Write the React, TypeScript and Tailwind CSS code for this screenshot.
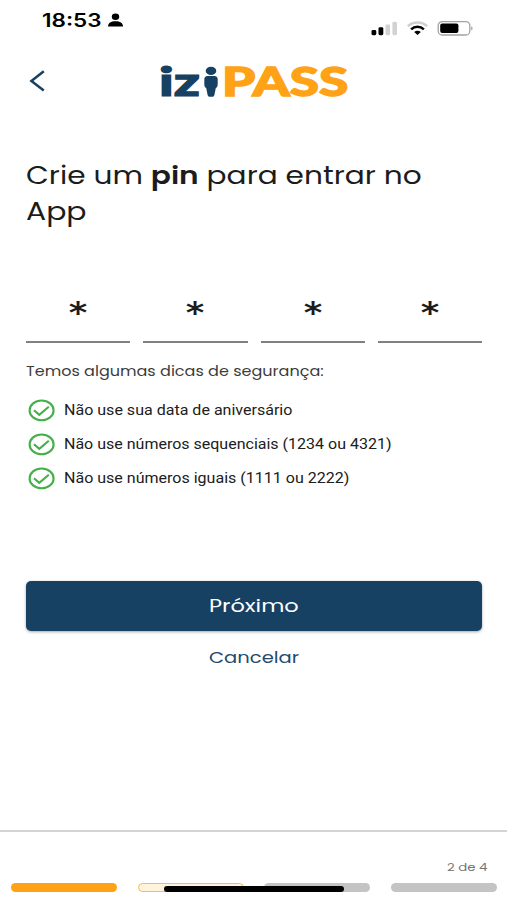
import { useLayoutEffect, useRef, useState } from "react";
import type { ReactNode } from "react";

const poppins = "font-['Poppins','Inter',sans-serif] [font-feature-settings:'cv11']";

// Stretches a single line of text horizontally so that it spans `width` pixels.
function FitText({ width, className, children }: { width: number; className: string; children: ReactNode }) {
  const ref = useRef<HTMLSpanElement>(null);
  const [scale, setScale] = useState(1);
  useLayoutEffect(() => {
    if (ref.current) setScale(width / ref.current.offsetWidth);
  }, [width]);
  return (
    <div className={className} style={{ width }}>
      <span ref={ref} className="inline-block origin-left whitespace-nowrap align-top" style={{ transform: `scaleX(${scale})` }}>
        {children}
      </span>
    </div>
  );
}

function StatusBar() {
  return (
    <div className="flex h-[45px] items-start justify-between pl-[42px] pr-[34px]">
      <div className="flex items-start">
        <FitText width={60} className="pt-[11px] font-['Inter',sans-serif] text-[18px] leading-5 font-semibold text-black">
          18:53
        </FitText>
        <svg className="mt-[13px] ml-[6px]" width="15" height="14" viewBox="0 0 15 14">
          <ellipse cx="7.5" cy="3.7" rx="3.7" ry="3.3" />
          <path d="M0 13.5C0 10 3 8.2 7.5 8.2S15 10 15 13.5Z" />
        </svg>
      </div>
      <div className="flex items-start pt-[20px]">
        <svg width="27" height="16" viewBox="0 0 27 16">
          <rect x="0.5" y="10" width="4.8" height="5.2" rx="1.4" />
          <rect x="7.5" y="7.2" width="4.8" height="8" rx="1.4" />
          <rect x="14.5" y="4.5" width="4.6" height="10.7" rx="1.4" fill="#d2d2d2" />
          <rect x="21.4" y="1.8" width="4.6" height="13.4" rx="1.4" fill="#d2d2d2" />
        </svg>
        <svg className="ml-[9px]" width="21" height="16" viewBox="0 0 21 16" fill="none">
          <path d="M.8 6.2C6 1.2 15 1.2 20.2 6.2" stroke="#cfcfcf" strokeWidth="2.5" />
          <path d="M4.1 9.3C7.8 5.8 13.2 5.8 16.9 9.3" stroke="#000" strokeWidth="2.5" />
          <path d="M7.2 12.1C9.2 10.3 11.8 10.3 13.8 12.1L10.5 15Z" fill="#000" />
        </svg>
        <svg className="ml-[9px]" width="36" height="16" viewBox="0 0 36 16">
          <rect x="1.2" y="1.6" width="31.6" height="13.4" rx="4" fill="#fff" stroke="#a3a3a3" strokeWidth="1.3" />
          <rect x="3.2" y="3.6" width="18.2" height="9.4" rx="2" />
          <path d="M34.3 6.2C36 7 36 9.6 34.3 10.4Z" fill="#8f8f8f" />
        </svg>
      </div>
    </div>
  );
}

function Logo() {
  return (
    <div className="flex h-[44px] items-start">
      <FitText width={41} className="-mt-px font-['Lato',sans-serif] text-[40px] leading-[44px] font-black text-[#174163] [-webkit-text-stroke:1.2px_#174163]">
        iz
      </FitText>
      <svg className="mt-[6px] ml-[4px]" width="14" height="31" viewBox="0 0 14 31" fill="#174163">
        <ellipse cx="7" cy="4.9" rx="5.3" ry="4.2" />
        <path d="M3.5 10H10.5Q13.7 10.3 13.7 13.2V18.5Q13.7 21.3 11.8 22L10.4 29Q10 30.8 8.8 30.8H5.2Q4 30.8 3.6 29L2.2 22Q.3 21.3 .3 18.5V13.2Q.3 10.3 3.5 10Z" />
      </svg>
      <FitText width={126} className="-mt-px ml-[4px] font-['Lato',sans-serif] text-[40px] leading-[44px] font-black text-[#ffa216] [-webkit-text-stroke:1.4px_#ffa216]">
        PASS
      </FitText>
    </div>
  );
}

function Tip({ width, children }: { width: number; children: string }) {
  return (
    <li className="flex h-[34px] items-center">
      <svg width="28" height="24" viewBox="0 0 28 24" fill="none" stroke="#43b04a" strokeWidth="2.1">
        <ellipse cx="14.6" cy="12.4" rx="12" ry="9.9" />
        <path d="M7 12.2L12.3 16.8L21.8 8.8" />
      </svg>
      <FitText width={width} className="ml-[9px] font-['Roboto',sans-serif] text-[14px] leading-5 text-[#202020]">
        {children}
      </FitText>
    </li>
  );
}

export default function App() {
  return (
    <main className="flex h-[900px] w-[507px] flex-col overflow-hidden bg-white">
      <StatusBar />
      <header className="flex h-[113px] items-start pt-[15px] pl-[29px]">
        <button className="mt-[10px]" aria-label="Voltar">
          <svg width="17" height="23" viewBox="0 0 17 23" fill="none" stroke="#174163" strokeWidth="2.5">
            <path d="M14.8 1.3L2.4 10.9L14.8 20.6" />
          </svg>
        </button>
        <div className="ml-[113px]">
          <Logo />
        </div>
      </header>

      <h1 className={`pl-[26px] text-[24px] leading-[36px] font-[370] text-[#1c1c1c] ${poppins}`}>
        <FitText width={396} className="">
          Crie um <b className="font-semibold">pin</b> para entrar no
        </FitText>
        <FitText width={61} className="">
          App
        </FitText>
      </h1>

      <div className="mr-[25px] ml-[26px] mt-[64px] grid grid-cols-4 gap-[13px]">
        {[0, 1, 2, 3].map((i) => (
          <div key={i} className="flex h-[49px] justify-center border-b-2 border-[#808080]">
            <FitText width={22} className="font-['Inter',sans-serif] text-[34px] leading-[40px] text-[#1c1c1c]">
              *
            </FitText>
          </div>
        ))}
      </div>

      <div className={`mt-[18px] pl-[26px] text-[14px] leading-5 text-[#3c3c3c] ${poppins}`}>
        <FitText width={298} className="">
          Temos algumas dicas de segurança:
        </FitText>
      </div>

      <ul className="mt-[12px] pl-[27px]">
        <Tip width={229}>Não use sua data de aniversário</Tip>
        <Tip width={328}>Não use números sequenciais (1234 ou 4321)</Tip>
        <Tip width={285}>Não use números iguais (1111 ou 2222)</Tip>
      </ul>

      <div className={`mr-[25px] ml-[26px] mt-[86px] flex flex-col ${poppins}`}>
        <button className="flex h-[50px] items-center justify-center rounded-[5px] bg-[#174163] text-[18px] leading-6 text-white shadow-[0_1px_3px_rgba(0,0,0,0.35)]">
          <FitText width={90} className="text-left">
            Próximo
          </FitText>
        </button>
        <button className="mt-[15px] flex justify-center text-[16.5px] leading-6 text-[#254b6b]">
          <FitText width={90} className="text-left">
            Cancelar
          </FitText>
        </button>
      </div>

      <footer className="relative mt-auto h-[70px] border-t-2 border-[#d4d4d4]">
        <div className={`flex justify-end pt-[25px] pr-[20px] text-[11px] leading-5 text-[#757575] ${poppins}`}>
          <FitText width={40} className="">
            2 de 4
          </FitText>
        </div>
        <div className="mr-[10px] ml-[11px] mt-[6px] grid grid-cols-4 gap-[20.5px]">
          <div className="h-[9px] rounded-full bg-[#ffa216]" />
          <div className="h-[9px] rounded-full border border-[#fbb955] bg-[#fff3dc]" />
          <div className="h-[9px] rounded-full bg-[#c4c4c4]" />
          <div className="h-[9px] rounded-full bg-[#c4c4c4]" />
        </div>
        <div className="absolute top-[54px] left-[164px] h-[6px] w-[180px] rounded-full bg-black" />
      </footer>
    </main>
  );
}
